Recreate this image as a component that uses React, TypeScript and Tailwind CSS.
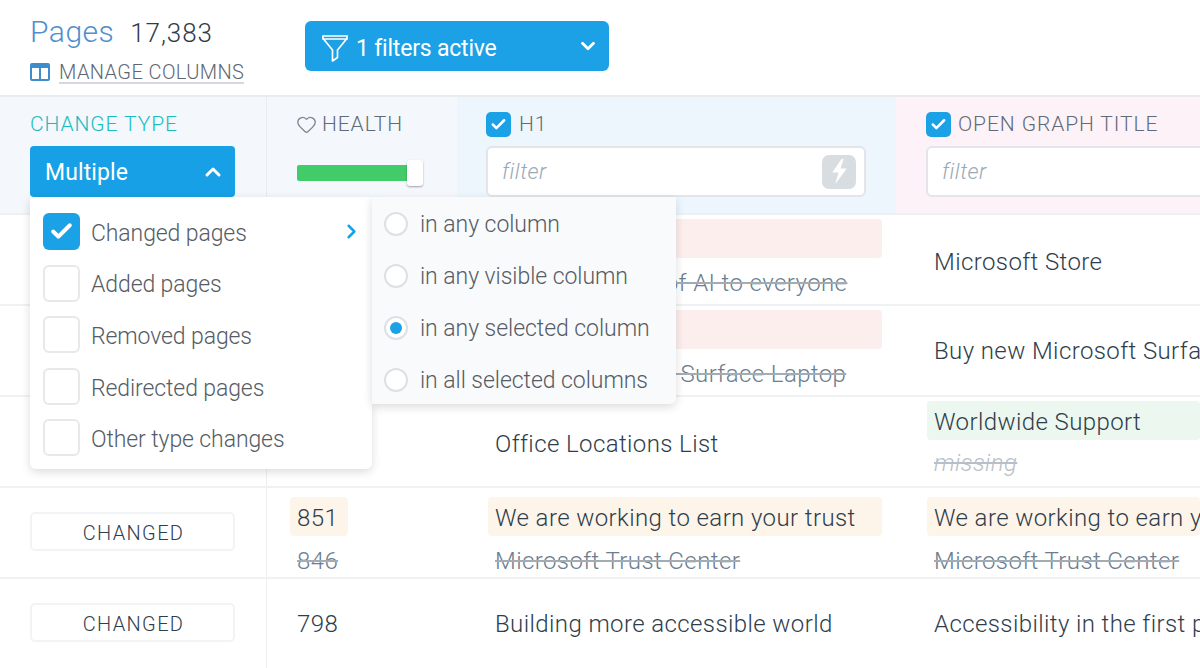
import { Check, ChevronDown, ChevronRight, ChevronUp, Heart } from "lucide-react";
import type { ReactNode } from "react";

const FONT = "font-['Roboto',sans-serif] font-light";

const changeTypes = ["Changed pages", "Added pages", "Removed pages", "Redirected pages", "Other type changes"];
const scopes = ["in any column", "in any visible column", "in any selected column", "in all selected columns"];

function Checkbox({ small }: { small?: boolean }) {
  return (
    <span
      className={
        small
          ? "flex h-[25px] w-[25px] shrink-0 items-center justify-center rounded-[5px] bg-[#1ba1e6]"
          : "flex h-[37px] w-[37px] shrink-0 items-center justify-center rounded-[6px] bg-[#1ba1e6]"
      }
    >
      <Check size={small ? 17 : 25} strokeWidth={small ? 3.6 : 3.8} className="text-white" />
    </span>
  );
}

function FilterInput({ children }: { children?: ReactNode }) {
  return (
    <div className="mt-[8px] flex h-[51px] items-center justify-between rounded-[6px] border-2 border-[#e3e5e8] bg-white pl-[14px] pr-[8px]">
      <span className="text-[22px] italic tracking-[0.5px] text-[#9aa8b8]">filter</span>
      {children}
    </div>
  );
}

function Pill({ color, children }: { color: string; children?: ReactNode }) {
  return (
    <div className={`flex h-[39px] items-center whitespace-nowrap rounded-[4px] px-[7px] pt-[2px] ${color}`}>
      {children}
    </div>
  );
}

function Old({ children }: { children: ReactNode }) {
  return (
    <div className="mt-[7px] h-[36px] whitespace-nowrap px-[7px] leading-[36px] text-[#6c7d8f] line-through decoration-[#a3abb3]">
      {children}
    </div>
  );
}

// changed cells sit at the top of the row, row 4 has them a bit lower
function Stack({ low, children }: { low?: boolean; children: ReactNode }) {
  return <div className={low ? "h-full pt-[9px]" : "h-full pt-[4px]"}>{children}</div>;
}

function Badge() {
  return (
    <div className="mb-[2px] flex h-[39px] w-[205px] items-center justify-center rounded-[5px] border-2 border-[#f2f3f4] pl-[2px] pt-[2px] text-[20px] tracking-[1.35px]">
      CHANGED
    </div>
  );
}

function Row({ type, health, h1, og }: { type?: ReactNode; health?: ReactNode; h1: ReactNode; og: ReactNode }) {
  return (
    <div className="grid h-[91px] grid-cols-[267px_190px_439px_304px] border-b-2 border-[#f0f1f3] text-[24px] tracking-[0.4px] text-[#2f3d4c]">
      <div className="flex items-center border-r border-[#eceef0] pl-[30px]">{type}</div>
      <div className="flex flex-col justify-center overflow-hidden pl-[23px]">{health}</div>
      <div className="flex flex-col justify-center overflow-hidden pl-[31px] pr-[14px]">{h1}</div>
      <div className="flex flex-col justify-center overflow-hidden pl-[31px]">{og}</div>
    </div>
  );
}

export default function App() {
  return (
    <div className={`relative h-[668px] w-[1200px] overflow-hidden bg-white ${FONT}`}>
      {/* top bar */}
      <div className="flex h-[97px] border-b-2 border-[#e9ebed] pl-[30px]">
        <div className="w-[275px] pt-[9px]">
          <div className="flex items-baseline gap-[16px]">
            <span className="text-[30px] tracking-[0.5px] text-[#4f8fcf]">Pages</span>
            <span className="text-[26px] tracking-[0.9px] text-[#2f3b48]">17,383</span>
          </div>
          <div className="mt-[5px] flex items-center gap-[9px]">
            <svg width="20" height="20" viewBox="0 0 20 20" className="text-[#3f8ccb]">
              <rect x="1" y="2" width="18" height="16" rx="1" fill="none" stroke="currentColor" strokeWidth="2" />
              <rect x="1" y="2" width="18" height="4" fill="currentColor" />
              <path d="M10 4v14" stroke="currentColor" strokeWidth="2" />
            </svg>
            <span className="border-b-2 border-[#d5d9de] pt-[3px] text-[20px] leading-[20px] tracking-[0.4px] text-[#5d6772]">
              MANAGE COLUMNS
            </span>
          </div>
        </div>
        <div className="pt-[21px]">
          <div className="flex h-[50px] w-[304px] items-center rounded-[6px] bg-[#1ca1e6] pl-[16px] pr-[10px] text-white">
            <svg width="28" height="28" viewBox="0 0 28 28" fill="none" stroke="currentColor" strokeWidth="1.7" className="mt-[3px]">
              <path d="M2 2h24v3H2z" />
              <path d="M2.5 5L11.5 16v11l5-3.5V16L25.5 5" strokeLinejoin="round" />
            </svg>
            <span className="ml-[7px] flex-1 pt-[6px] text-[23px] font-normal tracking-[-0.2px]">1 filters active</span>
            <ChevronDown size={22} strokeWidth={3} />
          </div>
        </div>
      </div>

      {/* column headers */}
      <div className="grid h-[118px] grid-cols-[267px_190px_439px_304px] border-b-2 border-[#eef0f2] text-[21px] tracking-[0.9px] text-[#5f6b78]">
        <div className="border-r border-[#e8ecf0] bg-[#f4f7fb] pl-[30px] pt-[14px]">
          <div className="flex h-[27px] items-center text-[#19bcc4]">CHANGE TYPE</div>
          <div className="mt-[8px] flex h-[51px] w-[205px] items-center justify-between rounded-[4px] bg-[#17a0e6] pl-[15px] pr-[10px] text-white">
            <span className="pt-[4px] text-[23px] font-normal tracking-[0.1px]">Multiple</span>
            <ChevronUp size={24} strokeWidth={3} />
          </div>
        </div>
        <div className="bg-[#f4f7fb] pl-[30px] pt-[14px]">
          <div className="-ml-[1px] flex h-[27px] items-center gap-[5px]">
            <Heart size={21} strokeWidth={1.5} className="text-[#7b8794]" />
            HEALTH
          </div>
          <div className="relative mt-[27px] h-[16px] w-[118px] rounded-[2px] bg-[#41cc69]">
            <div className="absolute -top-[5px] left-[110px] h-[26px] w-[16px] rounded-[3px] bg-white shadow-[0_1px_2px_rgba(0,0,0,0.35)]" />
          </div>
        </div>
        <div className="bg-[#edf6fd] pl-[29px] pr-[30px] pt-[14px]">
          <div className="flex h-[27px] items-center gap-[8px]">
            <Checkbox small />
            H1
          </div>
          <FilterInput>
            <span className="flex h-[34px] w-[34px] items-center justify-center rounded-[7px] bg-[#d8dde1]">
              <svg width="21" height="27" viewBox="0 0 20 26" fill="white">
                <path d="M12 1L3 14h6L6 25l11-15h-6l3-9z" />
              </svg>
            </span>
          </FilterInput>
        </div>
        <div className="bg-[#fdf2f7] pl-[30px] pt-[14px]">
          <div className="flex h-[27px] items-center gap-[7px] whitespace-nowrap">
            <Checkbox small />
            OPEN GRAPH TITLE
          </div>
          <div className="w-[320px]">
            <FilterInput />
          </div>
        </div>
      </div>

      {/* table rows */}
      <Row
        h1={
          <Stack>
            <Pill color="bg-[#fdeeee]" />
            <Old>Bringing power of AI to everyone</Old>
          </Stack>
        }
        og={<div className="mt-[4px] px-[7px]">Microsoft Store</div>}
      />
      <Row
        h1={
          <Stack>
            <Pill color="bg-[#fdeeee]" />
            <Old>Own a Microsoft Surface Laptop</Old>
          </Stack>
        }
        og={<div className="whitespace-nowrap px-[7px]">Buy new Microsoft Surface Laptop</div>}
      />
      <Row
        h1={<div className="mt-[4px] px-[7px]">Office Locations List</div>}
        og={
          <Stack>
            <Pill color="bg-[#ebf7ef]">Worldwide Support</Pill>
            <div className="mt-[5px] h-[36px] px-[7px] leading-[36px] italic text-[#b9bfc6] line-through">missing</div>
          </Stack>
        }
      />
      <Row
        type={<Badge />}
        health={
          <Stack low>
            <div className="w-[58px]">
              <Pill color="bg-[#fef5ea]">851</Pill>
            </div>
            <Old>846</Old>
          </Stack>
        }
        h1={
          <Stack low>
            <Pill color="bg-[#fef5ea]">We are working to earn your trust</Pill>
            <Old>Microsoft Trust Center</Old>
          </Stack>
        }
        og={
          <Stack low>
            <Pill color="bg-[#fef5ea]">We are working to earn your trust</Pill>
            <Old>Microsoft Trust Center</Old>
          </Stack>
        }
      />
      <Row
        type={<Badge />}
        health={<div className="px-[7px]">798</div>}
        h1={<div className="whitespace-nowrap px-[7px]">Building more accessible world</div>}
        og={<div className="whitespace-nowrap px-[7px]">Accessibility in the first place</div>}
      />

      {/* change type menu */}
      <div className="absolute left-[30px] top-[197px] h-[272px] w-[342px] rounded-b-[6px] bg-white pl-[12.5px] pr-[9px] pt-[16px] text-[23px] tracking-[-0.1px] text-[#555c64] shadow-[0_3px_10px_rgba(0,0,0,0.14)]">
        <div className="flex flex-col gap-[14.6px]">
          {changeTypes.map((label, i) => (
            <div key={label} className="flex h-[37px] items-center gap-[11.5px]">
              {i === 0 ? (
                <Checkbox />
              ) : (
                <span className="h-[37px] w-[37px] shrink-0 rounded-[6px] border-2 border-[#e6e8ea]" />
              )}
              <span className="flex-1 pt-[5px]">{label}</span>
              {i === 0 && <ChevronRight size={23} strokeWidth={2.6} className="text-[#1ba1e6]" />}
            </div>
          ))}
        </div>
      </div>

      {/* scope submenu */}
      <div className="absolute left-[372px] top-[197px] h-[207px] w-[304px] rounded-br-[6px] bg-[#f9fafc] pl-[12px] pt-[15px] text-[23px] tracking-[-0.05px] text-[#555c64] shadow-[0_3px_10px_rgba(0,0,0,0.14)]">
        <div className="flex flex-col gap-[28px]">
          {scopes.map((label, i) => (
            <div key={label} className="flex h-[24px] items-center gap-[12px]">
              <span className="flex h-[24px] w-[24px] shrink-0 items-center justify-center rounded-full border-2 border-[#dde0e4] bg-white">
                {i === 2 && <span className="h-[12px] w-[12px] rounded-full bg-[#1ba1e6]" />}
              </span>
              <span className="pt-[3px]">{label}</span>
            </div>
          ))}
        </div>
      </div>
    </div>
  );
}
